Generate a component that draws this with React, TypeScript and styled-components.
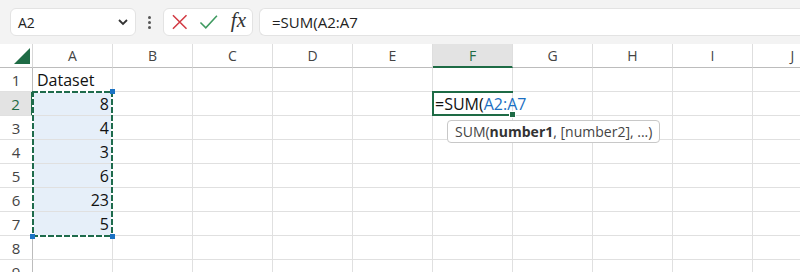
import styled, { createGlobalStyle } from 'styled-components';

const GlobalStyle = createGlobalStyle`
  html, body {
    margin: 0;
    padding: 0;
    background: #ffffff;
    overflow: hidden;
  }
  body {
    font-family: 'Open Sans', 'Noto Sans', sans-serif;
  }
`;

const COLUMNS = ['A', 'B', 'C', 'D', 'E', 'F', 'G', 'H', 'I', 'J'];
const ROWS = [1, 2, 3, 4, 5, 6, 7, 8, 9];
const DATA: Record<string, string> = {
  A1: 'Dataset',
  A2: '8',
  A3: '4',
  A4: '3',
  A5: '6',
  A6: '23',
  A7: '5',
};

const StyledPage = styled.div`
  width: 800px;
  height: 272px;
  overflow: hidden;
`;

const StyledToolbar = styled.div`
  height: 44px;
  background: #f3f3f3;
  display: flex;
  align-items: center;
  padding: 0 0 0 10px;
  box-sizing: border-box;
`;

const StyledNameBox = styled.div`
  width: 126px;
  height: 28px;
  box-sizing: border-box;
  background: #fff;
  border: 1px solid #e3e3e3;
  border-radius: 6px;
  display: flex;
  align-items: center;
  justify-content: space-between;
  padding: 0 6px 0 7px;
  font-size: 14px;
  color: #222;
`;

const StyledDots = styled.div`
  width: 27px;
  display: flex;
  flex-direction: column;
  align-items: center;
  gap: 2px;

  span {
    width: 3px;
    height: 3px;
    background: #555;
    border-radius: 50%;
  }
`;

const StyledButtonGroup = styled.div`
  width: 90px;
  height: 28px;
  box-sizing: border-box;
  background: #fff;
  border: 1px solid #e3e3e3;
  border-radius: 6px;
  display: flex;
  align-items: center;
  padding: 0 6px 0 7px;
  gap: 11px;
`;

const StyledFx = styled.span`
  font-family: 'Liberation Serif', 'DejaVu Serif', serif;
  font-style: italic;
  font-size: 21px;
  color: #333;
  line-height: 1;
  margin-top: -3px;
  margin-left: 1px;
`;

const StyledFormulaBar = styled.div`
  flex: 1;
  margin-left: 6px;
  height: 28px;
  box-sizing: border-box;
  background: #fff;
  border: 1px solid #e3e3e3;
  border-right: none;
  border-radius: 6px 0 0 6px;
  display: flex;
  align-items: center;
  padding-left: 12px;
  font-size: 15px;
  color: #222;
`;

const StyledGrid = styled.div`
  display: grid;
  grid-template-columns: 33px repeat(10, 80px);
  grid-auto-rows: 24px;
  width: 833px;
`;

const StyledCorner = styled.div`
  grid-row: 1;
  grid-column: 1;
  border-right: 1px solid #d8d8d8;
  border-bottom: 1px solid #bcbcbc;
  position: relative;

  &::after {
    content: '';
    position: absolute;
    right: 2px;
    bottom: 3px;
    width: 0;
    height: 0;
    border-left: 16px solid transparent;
    border-bottom: 16px solid #1e6b45;
  }
`;

const StyledColHeader = styled.div<{ $col: number; $active?: boolean }>`
  grid-row: 1;
  grid-column: ${({ $col }) => $col + 2};
  box-sizing: border-box;
  display: flex;
  align-items: center;
  justify-content: center;
  font-size: 14px;
  color: ${({ $active }) => ($active ? '#1e6b45' : '#444')};
  background: ${({ $active }) => ($active ? '#e3e3e3' : '#fff')};
  border-right: 1px solid #dedede;
  border-bottom: ${({ $active }) => ($active ? '2px solid #1e6b45' : '1px solid #bcbcbc')};
`;

const StyledRowHeader = styled.div<{ $row: number; $active?: boolean }>`
  grid-row: ${({ $row }) => $row + 1};
  grid-column: 1;
  box-sizing: border-box;
  display: flex;
  align-items: center;
  justify-content: center;
  font-size: 15px;
  color: ${({ $active }) => ($active ? '#1e6b45' : '#444')};
  background: ${({ $active }) => ($active ? '#e3e3e3' : '#fff')};
  border-right: ${({ $active }) => ($active ? '2px solid #1e6b45' : '1px solid #bcbcbc')};
  border-bottom: 1px solid #e0e0e0;
`;

const StyledCell = styled.div<{ $row: number; $col: number; $selected?: boolean }>`
  grid-row: ${({ $row }) => $row + 1};
  grid-column: ${({ $col }) => $col + 2};
  box-sizing: border-box;
  display: flex;
  align-items: center;
  justify-content: ${({ $selected }) => ($selected ? 'flex-end' : 'flex-start')};
  padding: 0 3px 0 4px;
  font-size: 16px;
  color: #111;
  white-space: nowrap;
  background: ${({ $selected }) => ($selected ? '#e6eff9' : '#fff')};
  border-right: 1px solid #e0e0e0;
  border-bottom: 1px solid #e0e0e0;
`;

const dash = (dir: string) =>
  `repeating-linear-gradient(${dir}, #1e6b4c 0 6px, #ffffff 6px 8px)`;

const StyledMarquee = styled.div`
  grid-column: 2;
  grid-row: 3 / span 6;
  margin: -1px 0 -1px -1px;
  position: relative;
  pointer-events: none;
  background:
    ${dash('90deg')} top left / 100% 2px no-repeat,
    ${dash('90deg')} bottom left / 100% 2px no-repeat,
    ${dash('180deg')} top left / 2px 100% no-repeat,
    ${dash('180deg')} top right / 2px 100% no-repeat;
`;

const StyledHandle = styled.span<{ $x: 'left' | 'right'; $y: 'top' | 'bottom' }>`
  position: absolute;
  width: 5px;
  height: 5px;
  background: #1b72c4;
  ${({ $x }) => `${$x}: -2px;`}
  ${({ $y }) => `${$y}: -2px;`}
`;

const StyledActiveCell = styled.div`
  grid-column: 7;
  grid-row: 3;
  margin: -1px 0 0 -1px;
  border: 2px solid #1e6b45;
  border-right: none;
  position: relative;
  display: flex;
  align-items: center;
  padding-left: 1px;
  font-size: 16px;
  color: #111;
  white-space: nowrap;
  overflow: visible;

  &::after {
    content: '';
    position: absolute;
    right: -3px;
    bottom: -4px;
    width: 5px;
    height: 5px;
    background: #1e6b45;
    border: 1px solid #fff;
  }
`;

const StyledRef = styled.span`
  color: #1b6fc2;
`;

const StyledTooltip = styled.div`
  grid-column: 7 / span 3;
  grid-row: 4;
  align-self: start;
  justify-self: start;
  margin: 4px 0 0 14px;
  height: 23px;
  box-sizing: border-box;
  padding: 0 7px;
  display: flex;
  align-items: center;
  background: #fff;
  border: 1px solid #c8c8c8;
  border-radius: 4px;
  font-size: 14px;
  color: #444;
  white-space: nowrap;
  z-index: 2;

  b {
    font-weight: 700;
    color: #333;
  }
`;

const CloseIcon = () => (
  <svg width="18" height="18" viewBox="0 0 18 18">
    <path d="M2 2 L16 16 M16 2 L2 16" stroke="#d23a43" strokeWidth="1.6" fill="none" />
  </svg>
);

const CheckIcon = () => (
  <svg width="20" height="18" viewBox="0 0 20 18">
    <path d="M1.5 9.5 L7 15 L18.5 2.5" stroke="#3f9a60" strokeWidth="1.6" fill="none" />
  </svg>
);

const ChevronIcon = () => (
  <svg width="12" height="12" viewBox="0 0 12 12">
    <path d="M2 4 L6 8 L10 4" stroke="#333" strokeWidth="1.8" fill="none" />
  </svg>
);

const App = () => (
  <StyledPage>
    <GlobalStyle />
    <StyledToolbar>
      <StyledNameBox>
        A2
        <ChevronIcon />
      </StyledNameBox>
      <StyledDots>
        <span />
        <span />
        <span />
      </StyledDots>
      <StyledButtonGroup>
        <CloseIcon />
        <CheckIcon />
        <StyledFx>fx</StyledFx>
      </StyledButtonGroup>
      <StyledFormulaBar>=SUM(A2:A7</StyledFormulaBar>
    </StyledToolbar>
    <StyledGrid>
      <StyledCorner />
      {COLUMNS.map((col, c) => (
        <StyledColHeader key={col} $col={c} $active={col === 'F'}>
          {col}
        </StyledColHeader>
      ))}
      {ROWS.map((row) => (
        <StyledRowHeader key={`h${row}`} $row={row} $active={row === 2}>
          {row}
        </StyledRowHeader>
      ))}
      {ROWS.map((row) =>
        COLUMNS.map((col, c) => {
          const id = `${col}${row}`;
          const selected = col === 'A' && row >= 2 && row <= 7;
          return (
            <StyledCell key={id} $row={row} $col={c} $selected={selected}>
              {DATA[id]}
            </StyledCell>
          );
        }),
      )}
      <StyledMarquee>
        <StyledHandle $x="right" $y="top" />
        <StyledHandle $x="left" $y="bottom" />
        <StyledHandle $x="right" $y="bottom" />
      </StyledMarquee>
      <StyledActiveCell>
        =SUM(<StyledRef>A2:A7</StyledRef>
      </StyledActiveCell>
      <StyledTooltip>
        SUM(<b>number1</b>, [number2], ...)
      </StyledTooltip>
    </StyledGrid>
  </StyledPage>
);

export default App;
